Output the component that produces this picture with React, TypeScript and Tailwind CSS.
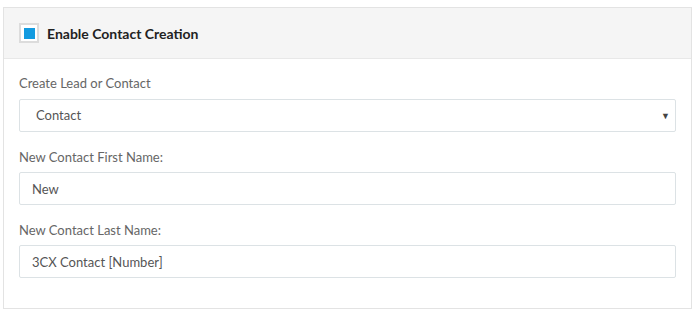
import { useState } from 'react';

function Field({ label, value }: { label: string; value: string }) {
  return (
    <div className="flex flex-col">
      <label className="h-4 text-[13px] leading-4 text-[#666]">{label}</label>
      <input
        defaultValue={value}
        className="mt-[7px] h-[33px] w-full rounded-[2px] border border-[#dce2e5] bg-white px-3 text-[13px] text-[#555] outline-none"
      />
    </div>
  );
}

export default function App() {
  const [enabled, setEnabled] = useState(true);

  return (
    <div className="h-[320px] w-[700px] bg-white pl-[3px] pt-[7px] font-['Lato','Liberation_Sans',sans-serif]">
      <div className="flex h-[302px] w-[689px] flex-col border border-[#e3e3e3] bg-white">
        <div className="flex h-[51px] items-center gap-2 border-b border-[#e8e8e8] bg-[#f5f5f5] pl-[15px]">
          <button
            onClick={() => setEnabled(!enabled)}
            className="flex h-[20px] w-[20px] items-center justify-center border-2 border-[#dcdcdc] bg-white"
          >
            {enabled && <span className="h-[11px] w-[11px] bg-[#139be0]" />}
          </button>
          <span className="text-[14px] font-bold text-[#222]">Enable Contact Creation</span>
        </div>

        <div className="flex flex-col gap-[17px] px-[15px] pt-4">
          <div className="flex flex-col">
            <label className="h-4 text-[13px] leading-4 text-[#666]">Create Lead or Contact</label>
            <div className="relative mt-2">
              <select
                defaultValue="Contact"
                className="h-[33px] w-full appearance-none rounded-[2px] border border-[#dce2e5] bg-white px-4 text-[13px] text-[#555] outline-none"
              >
                <option>Lead</option>
                <option>Contact</option>
              </select>
              <span className="pointer-events-none absolute right-[6px] top-1/2 -translate-y-1/2 text-[9px] text-[#444]">▼</span>
            </div>
          </div>

          <Field label="New Contact First Name:" value="New" />
          <Field label="New Contact Last Name:" value="3CX Contact [Number]" />
        </div>
      </div>
    </div>
  );
}
